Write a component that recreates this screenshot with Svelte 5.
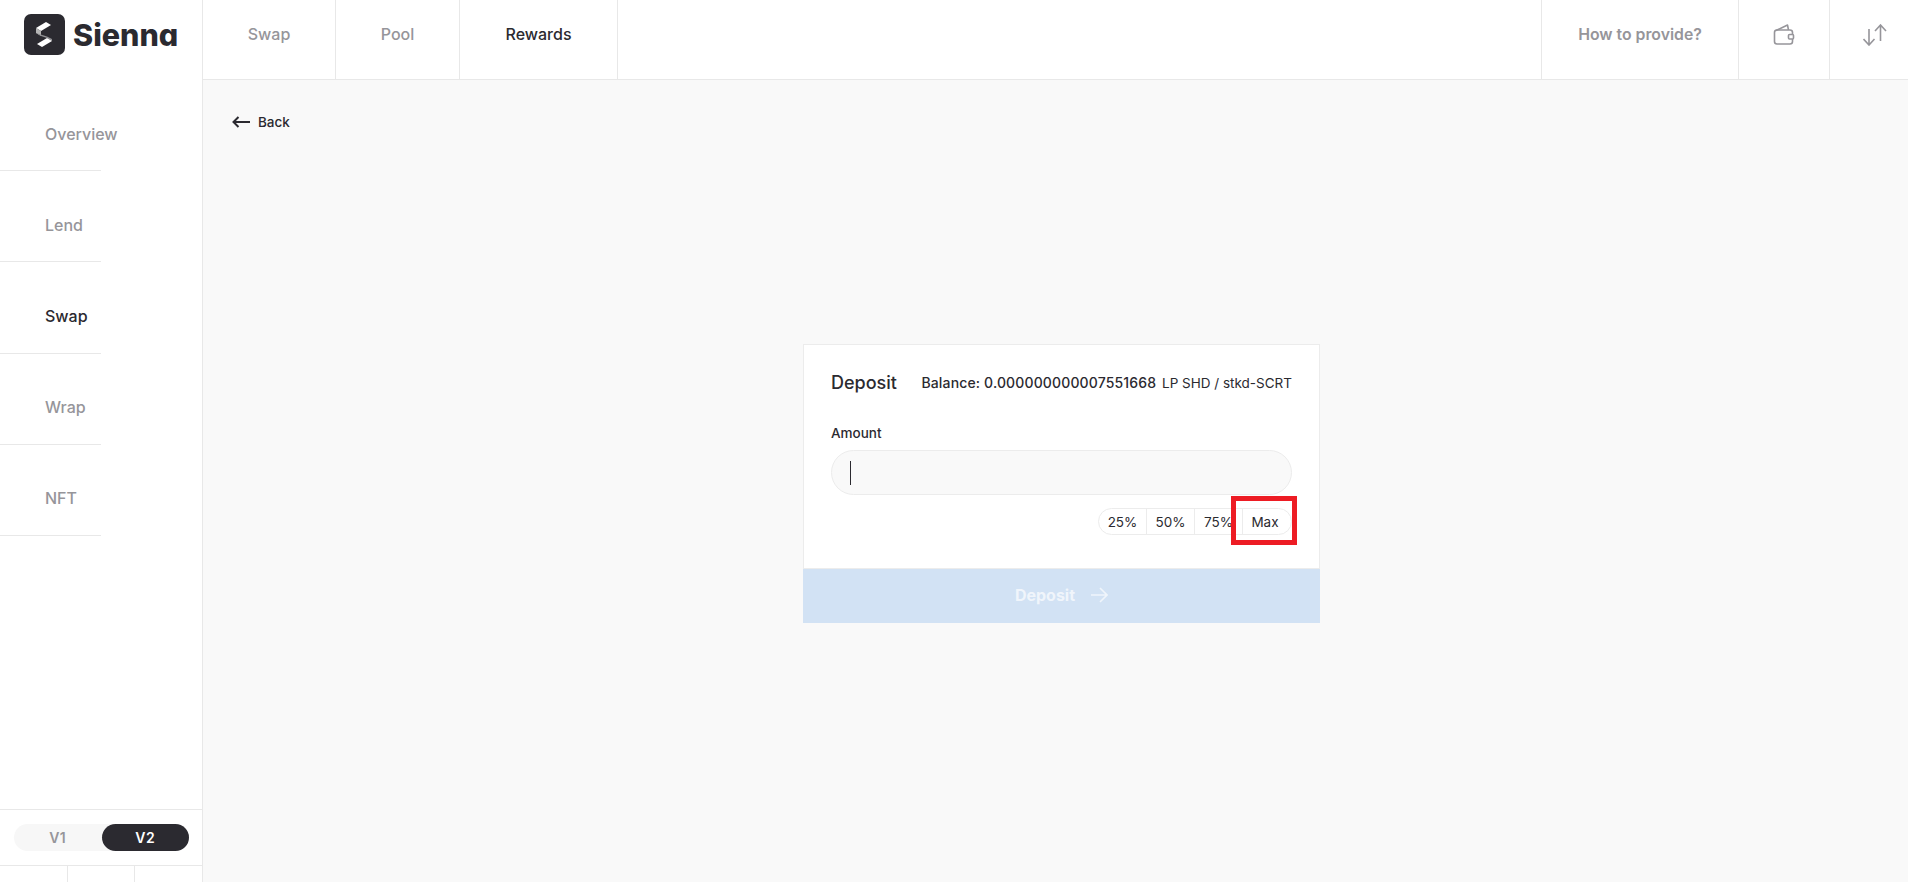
<script lang="ts">
	const topLinks = [
		{ label: 'Swap', cls: 'w133', active: false },
		{ label: 'Pool', cls: 'w124', active: false },
		{ label: 'Rewards', cls: 'w158', active: true }
	];
	const sideLinks = [
		{ label: 'Overview', active: false },
		{ label: 'Lend', active: false },
		{ label: 'Swap', active: true },
		{ label: 'Wrap', active: false },
		{ label: 'NFT', active: false }
	];
	const percents = ['25%', '50%', '75%', 'Max'];
</script>

<div class="page">
	<aside class="sidebar">
		<div class="logo">
			<svg class="logo-mark" width="41" height="41" viewBox="0 0 41 41">
				<rect width="41" height="41" rx="7" fill="#2b2a30" />
				<path d="M12 14 22 8l5 3-10 6z" fill="#fff" />
				<path d="M12 14l5 3v5l-5-3z" fill="#b4b4b4" />
				<path d="M17 22l-5-3 11 3.500 5 2.500v2l-5-3z" fill="#8f8f92" />
				<path d="M13 30l10-6 5 3-10 6z" fill="#fff" />
			</svg>
			<span class="logo-text">Sienna</span>
		</div>
		<nav class="side-nav">
			{#each sideLinks as link}
				<a class="side-link" class:active={link.active} href="#top">{link.label}</a>
			{/each}
		</nav>
		<div class="version">
			<div class="toggle">
				<span class="v">V1</span>
				<span class="v on">V2</span>
			</div>
		</div>
		<div class="side-foot">
			<span></span><span></span><span></span>
		</div>
	</aside>

	<div class="main">
		<header class="topbar">
			{#each topLinks as link}
				<a class="top-link {link.cls}" class:active={link.active} href="#top">{link.label}</a>
			{/each}
			<div class="spacer"></div>
			<a class="top-link help" href="#top">How to provide?</a>
			<div class="top-icon wallet">
				<svg width="22" height="22" viewBox="0 0 22 22" fill="none" stroke="#96959a" stroke-width="1.6" stroke-linejoin="round">
					<path d="M3 7.500 14.500 2 15.500 7" />
					<rect x="1.500" y="7" width="18" height="14" rx="2.500" />
					<rect x="15.500" y="11.500" width="5" height="4.500" rx="1" fill="#fff" />
				</svg>
			</div>
			<div class="top-icon swap">
				<svg width="25" height="22" viewBox="0 0 25 22" fill="none" stroke="#96959a" stroke-width="1.6">
					<path d="M6 5V21M.5 15 6 21l5.500-6" />
					<path d="M17.500 1V17M12 7 17.500 1 23 7" />
				</svg>
			</div>
		</header>

		<main class="content">
			<a class="back" href="#top">
				<svg width="18" height="12" viewBox="0 0 18 12" fill="none" stroke="#2b2a30" stroke-width="2">
					<path d="M18 6H1.500M6.500 1 1.500 6l5 5" />
				</svg>
				Back
			</a>

			<div class="card">
				<div class="card-body">
					<div class="card-head">
						<h2>Deposit</h2>
						<p class="balance">
							<span class="balance-value">Balance: 0.000000000007551668</span>
							<span class="balance-token">LP SHD / stkd-SCRT</span>
						</p>
					</div>
					<div class="amount-label">Amount</div>
					<div class="amount-input"><span class="caret"></span></div>
					<div class="percents">
						{#each percents as p}
							<button class="pct">{p}</button>
						{/each}
						<div class="highlight"></div>
					</div>
				</div>
				<button class="submit">
					Deposit
					<svg width="17" height="16" viewBox="0 0 17 16" fill="none" stroke="currentColor" stroke-width="1.6">
						<path d="M0 8h16M9 1l7 7-7 7" />
					</svg>
				</button>
			</div>
		</main>
	</div>
</div>

<style>
	:global(body) {
		margin: 0;
		font-family: Inter, 'Liberation Sans', sans-serif;
		color: #2b2a30;
		background: #f9f9f9;
	}

	.page {
		display: flex;
		height: 882px;
		overflow: hidden;
	}

	a {
		text-decoration: none;
		color: inherit;
	}

	.sidebar {
		width: 203px;
		flex-shrink: 0;
		box-sizing: border-box;
		background: #fff;
		border-right: 1px solid #e8e8e8;
		display: flex;
		flex-direction: column;
	}

	.logo {
		height: 80px;
		display: flex;
		align-items: flex-start;
		padding: 14px 0 0 24px;
		box-sizing: border-box;
		gap: 8px;
	}

	.logo-text {
		font-size: 30.500px;
		font-weight: 800;
		line-height: 41px;
		font-feature-settings: 'cv11' 1;
	}

	.side-nav {
		flex: 1;
		display: flex;
		flex-direction: column;
	}

	.side-link {
		width: 101px;
		height: 91.200px;
		box-sizing: border-box;
		padding: 0 0 27.500px 45px;
		border-bottom: 1px solid #e8e8e8;
		display: flex;
		align-items: flex-end;
		font-size: 16px;
		font-weight: 500;
		line-height: 18px;
		color: #96959a;
	}

	.side-link.active {
		color: #2b2a30;
	}

	.version {
		height: 57px;
		box-sizing: border-box;
		border-top: 1px solid #e8e8e8;
		border-bottom: 1px solid #e8e8e8;
		padding: 14px 13px 0 14px;
	}

	.toggle {
		display: flex;
		height: 27px;
		border-radius: 14px;
		background: #f7f7f7;
	}

	.v {
		flex: 1;
		display: flex;
		align-items: center;
		justify-content: center;
		font-size: 14px;
		font-weight: 600;
		letter-spacing: 0.500px;
		color: #96959a;
		border-radius: 14px;
	}

	.v.on {
		background: #2b2a30;
		color: #fff;
	}

	.side-foot {
		height: 16px;
		display: flex;
	}

	.side-foot span {
		width: 66.500px;
		border-right: 1px solid #e8e8e8;
	}

	.side-foot span:last-child {
		border-right: 0;
	}

	.main {
		flex: 1;
		display: flex;
		flex-direction: column;
		min-width: 0;
	}

	.topbar {
		height: 80px;
		box-sizing: border-box;
		background: #fff;
		border-bottom: 1px solid #e8e8e8;
		display: flex;
	}

	.top-link {
		display: flex;
		align-items: center;
		justify-content: center;
		box-sizing: border-box;
		border-right: 1px solid #e8e8e8;
		font-size: 16px;
		font-weight: 500;
		padding-bottom: 11px;
		color: #96959a;
	}

	.top-link.active {
		color: #2b2a30;
	}

	.w133 {
		width: 133px;
	}

	.w124 {
		width: 124px;
	}

	.w158 {
		width: 158px;
	}

	.spacer {
		flex: 1;
	}

	.top-link.help {
		width: 198px;
		border-left: 1px solid #e8e8e8;
		font-weight: 600;
		font-size: 15.800px;
	}

	.top-icon {
		display: flex;
		align-items: center;
		justify-content: center;
		box-sizing: border-box;
		padding-bottom: 11px;
	}

	.top-icon.wallet {
		width: 91px;
		border-right: 1px solid #e8e8e8;
	}

	.top-icon.swap {
		width: 78px;
		padding: 0 0 9px 13px;
	}

	.content {
		flex: 1;
		position: relative;
		display: flex;
		justify-content: center;
		padding: 264px 0 0 12px;
		box-sizing: border-box;
	}

	.back {
		position: absolute;
		left: 29px;
		top: 34px;
		display: flex;
		align-items: center;
		gap: 8px;
		font-size: 13.500px;
		font-weight: 500;
		line-height: 16px;
	}

	.card {
		width: 517px;
		height: 279px;
		display: flex;
		flex-direction: column;
		background: #fff;
	}

	.card-body {
		flex: 1;
		border: 1px solid #ececec;
		border-bottom: 0;
		padding: 26px 27px 0;
		box-sizing: border-box;
	}

	.card-head {
		display: flex;
		align-items: center;
		justify-content: space-between;
		height: 22px;
	}

	h2 {
		margin: 0;
		font-size: 18px;
		font-weight: 500;
	}

	.balance {
		margin: 0;
		font-size: 13.500px;
		white-space: nowrap;
	}

	.balance-value {
		font-size: 14px;
		font-weight: 500;
		letter-spacing: 0.150px;
		margin-right: 2px;
	}

	.balance-token {
		font-weight: 400;
	}

	.amount-label {
		margin-top: 32px;
		font-size: 13.500px;
		font-weight: 500;
		line-height: 16px;
	}

	.amount-input {
		margin-top: 9px;
		height: 45px;
		box-sizing: border-box;
		border: 1px solid #ececec;
		border-radius: 23px;
		background: #f9f9f9;
		display: flex;
		align-items: center;
		padding-left: 18px;
	}

	.caret {
		width: 1px;
		height: 24px;
		background: #2b2a30;
	}

	.percents {
		position: relative;
		margin: 13px 0 0 auto;
		width: 194px;
		height: 27px;
		box-sizing: border-box;
		border: 1px solid #ececec;
		border-radius: 14px;
		display: grid;
		grid-template-columns: repeat(4, 1fr);
	}

	.pct {
		border: 0;
		border-right: 1px solid #ececec;
		background: none;
		padding: 0;
		font: 400 13.500px Inter, 'Liberation Sans', sans-serif;
		color: #2b2a30;
	}

	.pct:last-of-type {
		border-right: 0;
		padding-right: 4px;
	}

	.highlight {
		position: absolute;
		left: 132px;
		top: -13px;
		width: 65.500px;
		height: 49px;
		box-sizing: border-box;
		border: 5px solid #ed1c24;
	}

	.submit {
		height: 55px;
		flex-shrink: 0;
		border: 0;
		border-top: 1px solid #ececec;
		background: #d2e2f4;
		color: #f0f5fb;
		display: flex;
		align-items: center;
		justify-content: center;
		gap: 16px;
		padding-bottom: 4px;
		font: 700 16px Inter, 'Liberation Sans', sans-serif;
	}
</style>
